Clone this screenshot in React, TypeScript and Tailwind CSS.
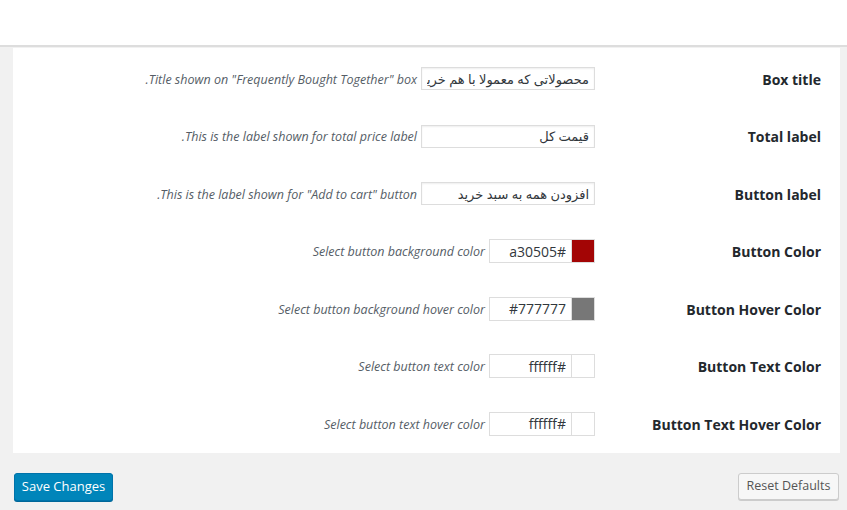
import type { ReactNode } from "react";

type Field =
  | { id: string; label: string; kind: "text"; value: string; help: string }
  | { id: string; label: string; kind: "color"; value: string; swatch: string; help: string };

const fields: Field[] = [
  {
    id: "box_title",
    label: "Box title",
    kind: "text",
    value: "محصولاتی که معمولا با هم خریداری می‌شوند",
    help: 'Title shown on "Frequently Bought Together" box.',
  },
  {
    id: "total_label",
    label: "Total label",
    kind: "text",
    value: "قیمت کل",
    help: "This is the label shown for total price label.",
  },
  {
    id: "button_label",
    label: "Button label",
    kind: "text",
    value: "افزودن همه به سبد خرید",
    help: 'This is the label shown for "Add to cart" button.',
  },
  {
    id: "button_color",
    label: "Button Color",
    kind: "color",
    value: "#a30505",
    swatch: "bg-[#a30505]",
    help: "Select button background color",
  },
  {
    id: "button_hover_color",
    label: "Button Hover Color",
    kind: "color",
    value: "#777777",
    swatch: "bg-[#777777]",
    help: "Select button background hover color",
  },
  {
    id: "button_text_color",
    label: "Button Text Color",
    kind: "color",
    value: "#ffffff",
    swatch: "bg-[#ffffff]",
    help: "Select button text color",
  },
  {
    id: "button_text_hover_color",
    label: "Button Text Hover Color",
    kind: "color",
    value: "#ffffff",
    swatch: "bg-[#ffffff]",
    help: "Select button text hover color",
  },
];

const Help = ({ children }: { children: ReactNode }) => (
  <span className="mr-[4px] pt-[3px] text-[12.5px] italic text-[#555d66]">{children}</span>
);

const SettingRow = ({ field }: { field: Field }) => (
  <div className="flex h-[57.5px] items-center">
    <label
      className="w-[216px] shrink-0 pt-[1px] text-[14px] font-bold text-[#23282d]"
      htmlFor={field.id}
    >
      {field.label}
    </label>
    <div className="mr-[10px] flex items-center">
      {field.kind === "text" ? (
        <input
          className="h-[23px] w-[174px] border border-[#dddddd] bg-white px-[5px] text-[13px] text-[#32373c] shadow-[inset_0_1px_2px_rgba(0,0,0,0.07)] outline-none"
          defaultValue={field.value}
          dir="rtl"
          id={field.id}
          type="text"
        />
      ) : (
        <div className="flex">
          <span className={`h-[24px] w-[24px] border border-[#dddddd] ${field.swatch}`} />
          <input
            className="h-[24px] w-[82px] border border-l border-r-0 border-[#dddddd] bg-white px-[5px] text-right text-[14px] text-[#32373c] outline-none"
            defaultValue={field.value}
            dir="rtl"
            id={field.id}
            type="text"
          />
        </div>
      )}
      <Help>{field.help}</Help>
    </div>
  </div>
);

export default function App() {
  return (
    <div
      className="min-h-[510px] bg-[#f1f1f1] font-['Open_Sans','DejaVu_Sans',sans-serif]"
      dir="rtl"
    >
      <div className="h-[45px] bg-white" />
      <div className="h-[3px] border-t-2 border-[#dddddd] bg-[#f1f1f1]" />
      <div className="mr-[7px] ml-[13px] bg-white pt-[2px] pr-[19px]">
        {fields.map((field) => (
          <SettingRow key={field.id} field={field} />
        ))}
      </div>
      <div className="mt-[20px] flex justify-between pr-[8px] pl-[14px]" dir="ltr">
        <button
          className="h-[28px] w-[99px] rounded-[3px] border border-[#0073aa] bg-[#0085ba] text-[13px] text-white shadow-[0_1px_0_#006799]"
          type="button"
        >
          Save Changes
        </button>
        <button
          className="h-[27px] w-[101px] rounded-[3px] border border-[#cccccc] bg-[#f7f7f7] text-[12.5px] text-[#555555] shadow-[0_1px_0_#cccccc]"
          type="button"
        >
          Reset Defaults
        </button>
      </div>
    </div>
  );
}
